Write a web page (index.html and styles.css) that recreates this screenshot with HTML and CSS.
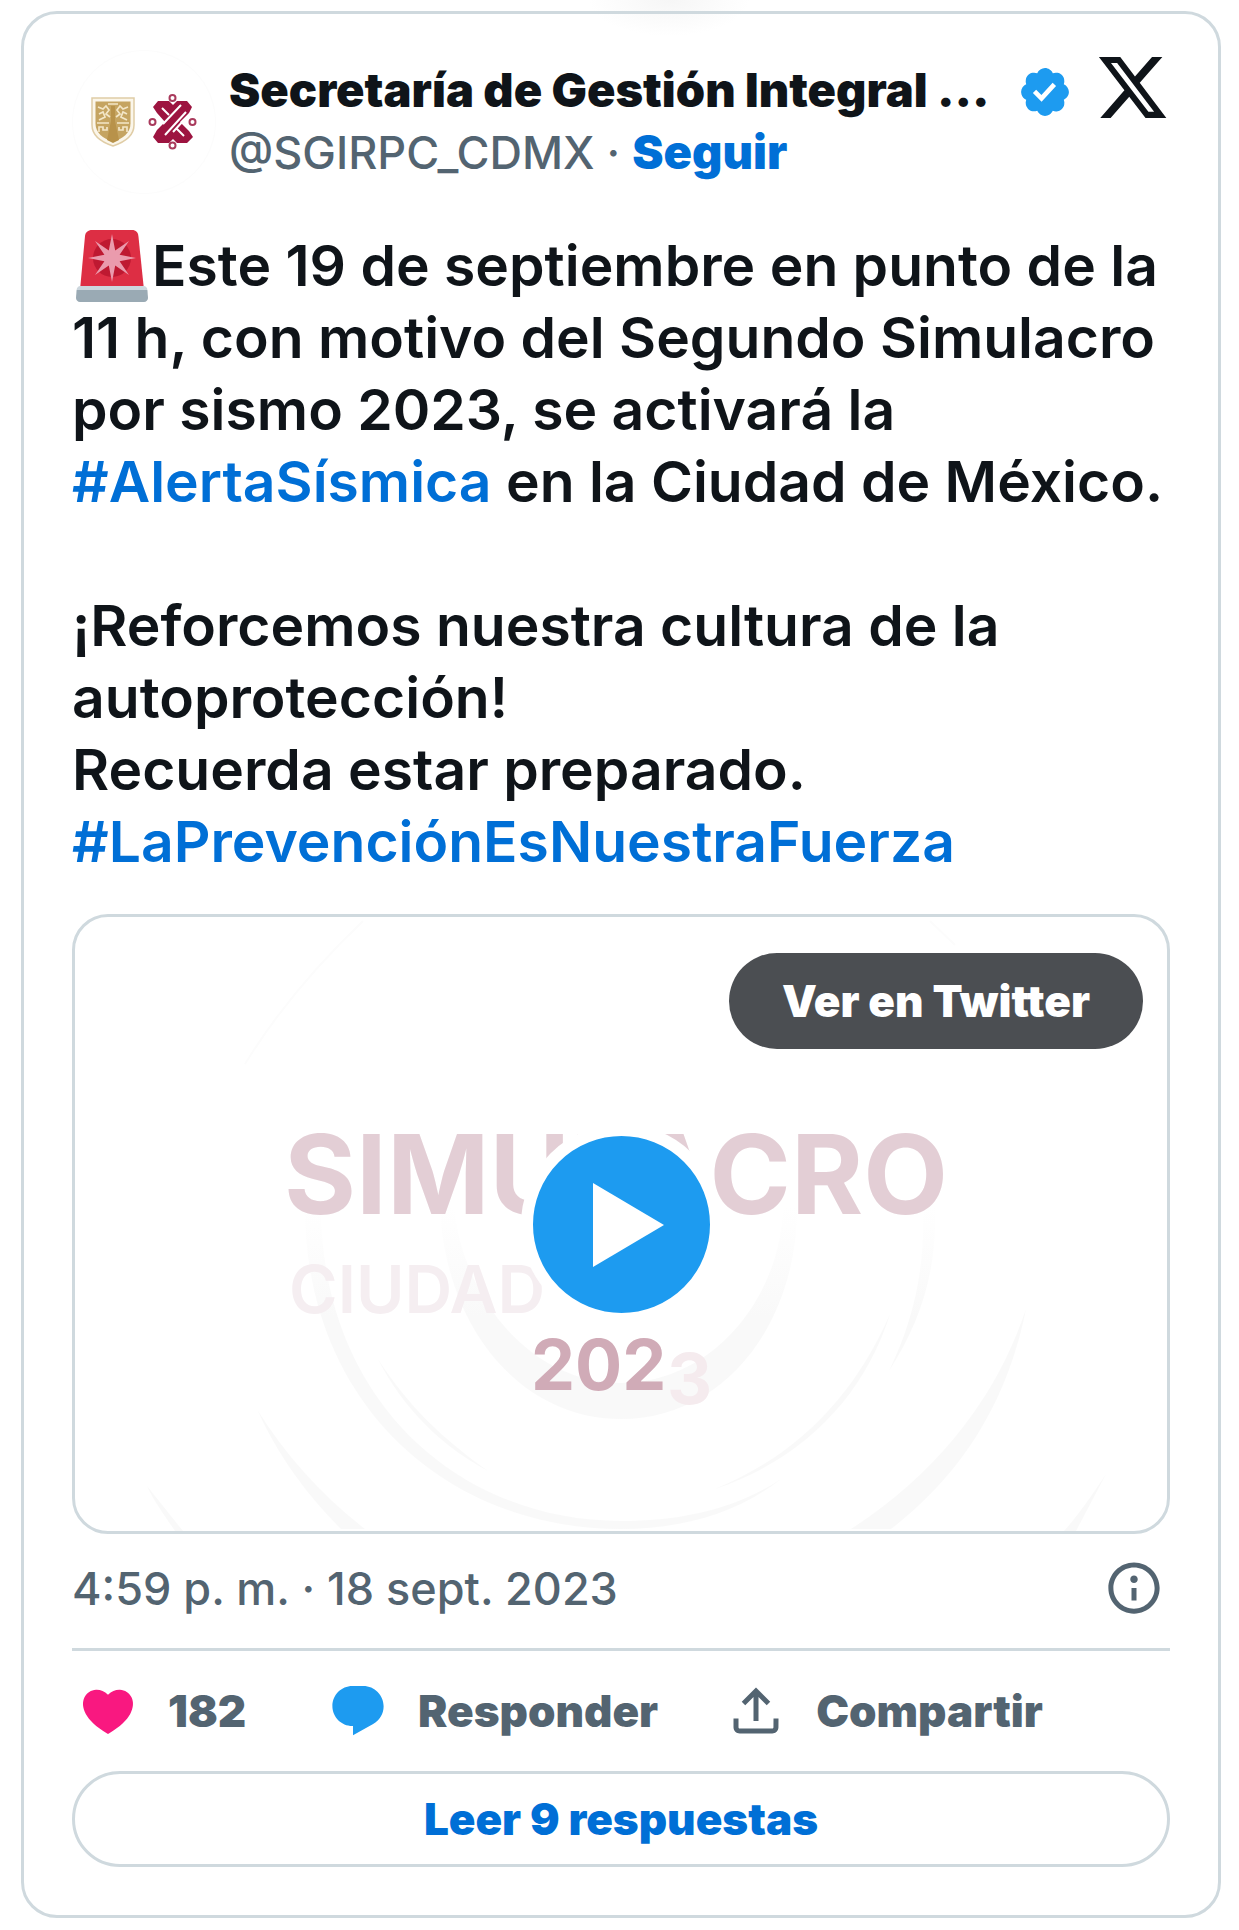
FILE: index.html
```html
<!DOCTYPE html>
<html lang="es">
<head>
    <meta charset="UTF-8">
    <meta name="viewport" content="width=device-width, initial-scale=1.0">
    <title>Secretaría de Gestión Integral en X</title>
    <link rel="stylesheet" href="styles.css">
</head>
<body>
    <article class="tweet">
        <header class="tweet-header">
            <a href="#" class="avatar" aria-label="SGIRPC_CDMX">
                <svg viewBox="0 0 144 144">
                    <circle cx="72" cy="72" r="71.500" fill="#fff" stroke="#fcfcfc"/>
                    <!-- Escudo -->
                    <path d="M20 48h42v27c0 11-9 17-21 21-12-4-21-10-21-21z" fill="#fbf6ea" stroke="#e0cda6" stroke-width="1.500"/>
                    <path d="M23.500 51.500h35v22c0 10-8 15-17.500 18.500-9.500-3.500-17.500-8.500-17.500-18.500z" fill="#c5a461"/>
                    <path d="M26 57l5 2 3-3 3 4-3 4 4 3M56 57l-5 2-3-3-3 4 3 4-4 3M27 64l4-2 2 5-6 3M55 64l-4-2-2 5 6 3M36 54h10M25 73h12M45 73h12M27 82v-5h4v3h4v-3M55 82v-5h-4v3h-4v-3M39 68h4" fill="none" stroke="#f3e6c7" stroke-width="1.700"/>
                    <path d="M39 56h4v15l4 19-6 3-6-3 4-19z" fill="#b8924a"/>
                    <!-- Logo CDMX -->
                    <path d="M86 51h11l4 4 4-4h10l5 6-3 6-9 9 9 9 4 6-6 6h-10l-4-4-4 4H86l-5-6 4-7 8-8-8-9-4-6z" fill="#9d1440"/>
                    <path d="M109 55L91 74M114 62L93 85M112 70L101 82M90 58l7 7M112 86l-7-7" fill="none" stroke="#fff" stroke-width="2"/>
                    <g fill="#fff" stroke="#a93a5c" stroke-width="2">
                        <circle cx="100.500" cy="48" r="3"/>
                        <circle cx="100.500" cy="95.500" r="3"/>
                        <circle cx="80.500" cy="72" r="3"/>
                        <circle cx="120.500" cy="72" r="3"/>
                    </g>
                </svg>
            </a>
            <div class="author">
                <div class="name-row">
                    <a href="#" class="name">Secretaría de Gestión Integral ...</a>
                    <svg class="verified" viewBox="0 0 22 22" role="img" aria-label="Cuenta verificada"><path d="M20.396 11c-.018-.646-.215-1.275-.57-1.816-.354-.54-.852-.972-1.438-1.246.223-.607.27-1.264.14-1.897-.131-.634-.437-1.218-.882-1.687-.47-.445-1.053-.75-1.687-.882-.633-.13-1.290-.083-1.897.14-.273-.587-.704-1.086-1.245-1.440S11.647 1.620 11 1.604c-.646.017-1.273.213-1.813.568s-.969.854-1.240 1.440c-.608-.223-1.267-.272-1.902-.14-.635.13-1.220.436-1.690.882-.445.47-.749 1.055-.878 1.688-.13.633-.08 1.290.144 1.896-.587.274-1.087.705-1.443 1.245-.356.54-.555 1.170-.574 1.817.02.647.218 1.276.574 1.817.356.54.856.972 1.443 1.245-.224.606-.274 1.263-.144 1.896.13.634.433 1.218.877 1.688.47.443 1.054.747 1.687.878.633.132 1.290.084 1.897-.136.274.586.705 1.084 1.246 1.439.54.354 1.170.551 1.816.569.647-.016 1.276-.213 1.817-.567s.972-.854 1.245-1.440c.604.239 1.266.296 1.903.164.636-.132 1.220-.447 1.680-.907.46-.46.776-1.044.908-1.681s.075-1.299-.165-1.903c.586-.274 1.084-.705 1.439-1.246.354-.54.551-1.170.569-1.816zM9.662 14.850l-3.429-3.428 1.293-1.302 2.072 2.072 4.400-4.794 1.347 1.246z"/></svg>
                </div>
                <div class="handle-row">
                    <a href="#" class="handle">@SGIRPC_CDMX</a>
                    <span>·</span>
                    <a href="#" class="follow">Seguir</a>
                </div>
            </div>
            <a href="#" class="x-logo" aria-label="Ver en X">
                <svg viewBox="0 0 24 24"><path d="M18.244 2.250h3.308l-7.227 8.260 8.502 11.240H16.170l-5.214-6.817L4.990 21.750H1.680l7.730-8.835L1.254 2.250H8.080l4.713 6.231zm-1.161 17.520h1.833L7.084 4.126H5.117z"/></svg>
            </a>
        </header>

        <p class="tweet-text"><svg class="emoji" viewBox="0 0 36 36" role="img" aria-label="Sirena"><path fill="#DD2E44" d="M34 30H2L4.500 3C4.700 1.200 6 0 8 0h20c2 0 3 1.200 3.200 3z"/><circle cx="18" cy="14" r="9.500" fill="#BE1931"/><path fill="#EA9BAD" d="M18 2l1.600 8.200 6.900-4.700-4.700 6.900L30 14l-8.200 1.600 4.700 6.900-6.900-4.700L18 26l-1.600-8.200-6.900 4.700 4.700-6.900L6 14l8.200-1.600-4.700-6.900 6.900 4.700z"/><path fill="#9AAAB4" d="M36 34c0 1.100-.9 2-2 2H2c-1.100 0-2-.9-2-2l.3-4h35.400z"/><path fill="#CCD6DD" d="M35.700 30H.3c0-1.100.8-2 1.900-2h31.600c1.100 0 1.900.9 1.900 2z"/></svg>Este 19 de septiembre en punto de la
11 h, con motivo del Segundo Simulacro
por sismo 2023, se activará la
<a href="#">#AlertaSísmica</a> en la Ciudad de México.

¡Reforcemos nuestra cultura de la
autoprotección!
Recuerda estar preparado.
<a href="#">#LaPrevenciónEsNuestraFuerza</a></p>

        <div class="media">
            <svg class="poster" viewBox="0 0 1092 614">
                <defs>
                    <linearGradient id="ring" gradientUnits="userSpaceOnUse" x1="0" y1="290" x2="0" y2="400">
                        <stop offset="0" stop-color="#fff"/>
                        <stop offset="1" stop-color="#f9f9f9"/>
                    </linearGradient>
                </defs>
                <g fill="url(#ring)">
                    <path d="M365 290c5 120 80 212 181 212s176-92 176-212h-14c-2 90-70 176-162 176s-158-86-167-176z"/>
                    <path d="M230 290c0 195 140 322 316 322 60 0 115-15 160-50-45 30-100 42-160 42-165 0-300-124-300-314z"/>
                    <path d="M848 290c2 60-8 110-34 164 32-50 48-100 46-164z"/>
                    <path d="M303 442c25 50 65 88 110 112-45-32-80-65-110-112z"/>
                    <path d="M183 494c20 45 50 85 83 118h24c-45-35-80-75-107-118z"/>
                    <path d="M72 569c8 17 20 33 28 45h8z"/>
                    <path d="M815 397c-35 80-90 140-175 175 90-30 150-95 175-175z"/>
                    <path d="M951 392c-30 90-90 165-175 220h40c65-50 115-120 135-220z"/>
                    <path d="M1031 557c-10 15-25 38-42 57h12z"/>
                </g>
                <path d="M170 147C205 90 245 45 288 4M855 4l25 24" fill="none" stroke="#fcfcfc" stroke-width="2"/>
                <text x="209" y="297" class="poster-title">SIMULACRO</text>
                <text x="214" y="396" class="poster-place">CIUDAD</text>
                <text x="456" y="473" class="poster-year">202</text>
                <text x="592" y="487" class="poster-year poster-digit">3</text>
            </svg>
            <button type="button" class="play" aria-label="Reproducir video">
                <svg viewBox="0 0 177 177"><path d="M60 47l71 42-71 42z"/></svg>
            </button>
            <a href="#" class="watch">Ver en Twitter</a>
        </div>

        <div class="meta">
            <a href="#" class="date">4:59 p. m. · 18 sept. 2023</a>
            <a href="#" class="info" aria-label="Información sobre anuncios">
                <svg class="icon" viewBox="0 0 24 24"><path d="M13.500 8.500c0 .83-.67 1.500-1.500 1.500s-1.500-.67-1.500-1.500S11.170 7 12 7s1.500.67 1.500 1.500zM13 17v-5h-2v5h2zm-1 5.250c5.660 0 10.250-4.590 10.250-10.250S17.660 1.750 12 1.750 1.750 6.340 1.750 12 6.340 22.250 12 22.250zM20.250 12c0 4.560-3.690 8.250-8.250 8.250S3.750 16.560 3.750 12 7.440 3.750 12 3.750s8.250 3.690 8.250 8.250z"/></svg>
            </a>
        </div>

        <div class="actions">
            <button type="button" class="action like">
                <svg class="icon" viewBox="0 0 24 24"><path d="M20.884 13.190c-1.351 2.480-4.001 5.120-8.379 7.670l-.503.3-.504-.3c-4.379-2.550-7.029-5.190-8.382-7.670-1.360-2.500-1.410-4.860-.514-6.670.887-1.790 2.647-2.910 4.601-3.010 1.651-.09 3.368.56 4.798 2.010 1.429-1.450 3.146-2.100 4.796-2.010 1.954.1 3.714 1.220 4.601 3.010.896 1.810.846 4.170-.514 6.670z"/></svg>
                <span class="count">182</span>
            </button>
            <button type="button" class="action reply">
                <svg class="icon" viewBox="0 0 24 24"><path d="M1.751 10c0-4.420 3.584-8 8.005-8h4.366c4.490 0 8.129 3.640 8.129 8.130 0 2.960-1.607 5.680-4.196 7.110l-8.054 4.460v-3.690h-.067c-4.490.1-8.183-3.510-8.183-8.010z"/></svg>
                <span>Responder</span>
            </button>
            <button type="button" class="action share">
                <svg class="icon" viewBox="0 0 24 24"><path d="M12 2.590l5.700 5.700-1.410 1.420L13 6.410V16h-2V6.410l-3.300 3.300-1.410-1.420L12 2.590zM21 15l-.02 3.510c0 1.380-1.120 2.490-2.500 2.490H5.500C4.110 21 3 19.880 3 18.500V15h2v3.500c0 .28.22.5.5.5h12.980c.28 0 .5-.22.5-.5L19 15h2z"/></svg>
                <span>Compartir</span>
            </button>
        </div>

        <a href="#" class="replies">Leer 9 respuestas</a>
    </article>
</body>
</html>
```
FILE: styles.css
```css
* {
    box-sizing: border-box;
}
body {
    margin: 0;
    padding: 11px 18px 10px 21px;
    font-family: Inter, "Liberation Sans", Arial, sans-serif;
    font-size: 45px;
    font-weight: 500;
    color: #0f1419;
    background: #fff radial-gradient(ellipse 80px 36px at 54% 0, #f6f6f6, #fff) no-repeat;
}
a {
    color: #006fd6;
    text-decoration: none;
}
button {
    font: inherit;
    border: none;
    padding: 0;
    cursor: pointer;
}
svg {
    display: block;
}
.tweet {
    border: 3px solid #cfd9de;
    border-radius: 36px;
    padding: 36px 48px 48px;
}
.tweet-header {
    display: flex;
    align-items: flex-start;
}
.avatar {
    width: 144px;
    height: 144px;
    margin-right: 13px;
    flex-shrink: 0;
}
.author {
    flex: 1;
    min-width: 0;
    padding-top: 9px;
}
.name-row {
    display: flex;
    align-items: center;
    justify-content: space-between;
    line-height: 62px;
}
.name {
    color: #0f1419;
    font-size: 47px;
    font-weight: 900;
    white-space: nowrap;
}
.verified {
    width: 56px;
    height: 56px;
    margin: 4px 22px 0 0;
    fill: #1d9bf0;
    flex-shrink: 0;
}
.handle-row {
    line-height: 62px;
    color: #536471;
    white-space: nowrap;
}
.handle {
    color: #536471;
}
.follow {
    font-size: 47px;
    font-weight: 900;
}
.x-logo {
    width: 75px;
    flex-shrink: 0;
    fill: #0f1419;
}
.tweet-text {
    margin: 36px 0;
    font-size: 57px;
    font-weight: 600;
    line-height: 72px;
    white-space: pre-line;
}
.emoji {
    display: inline-block;
    width: 72px;
    height: 72px;
    margin: 0 4px;
    vertical-align: top;
}
.media {
    position: relative;
    display: grid;
    place-items: center;
    border: 3px solid #cfd9de;
    border-radius: 36px;
    overflow: hidden;
}
.poster {
    width: 100%;
}
.poster-title {
    font-size: 110px;
    font-weight: 700;
    fill: #e3ced5;
}
.poster-place {
    font-size: 66px;
    font-weight: 600;
    fill: #f5eef1;
}
.poster-year {
    font-size: 70px;
    font-weight: 700;
    fill: #d0abb7;
}
.poster-digit {
    fill: #f5ebee;
}
.play {
    position: absolute;
    width: 201px;
    height: 201px;
    border: 12px solid #fff;
    border-radius: 50%;
    background-color: #1d9bf0;
    fill: #fff;
}
.watch {
    position: absolute;
    top: 36px;
    right: 24px;
    padding: 0 53px;
    border-radius: 48px;
    background-color: #4b4e52;
    color: #fff;
    font-size: 44px;
    font-weight: 900;
    line-height: 96px;
}
.meta {
    display: flex;
    align-items: center;
    justify-content: space-between;
    height: 117px;
    padding: 0 6px 6px 0;
    border-bottom: 3px solid #cfd9de;
}
.date {
    color: #536471;
}
.icon {
    width: 60px;
    height: 60px;
    fill: #536471;
}
.actions {
    display: flex;
    align-items: center;
    gap: 68px;
    padding: 30px 6px;
}
.action {
    display: flex;
    align-items: center;
    gap: 30px;
    background: none;
    color: #536471;
    font-size: 44px;
    font-weight: 900;
    line-height: 60px;
}
.count {
    min-width: 92px;
    text-align: left;
}
.like .icon {
    fill: #f91880;
}
.reply .icon {
    fill: #1d9bf0;
}
.replies {
    display: block;
    border: 3px solid #cfd9de;
    border-radius: 48px;
    font-size: 44px;
    font-weight: 900;
    line-height: 90px;
    text-align: center;
}
```
